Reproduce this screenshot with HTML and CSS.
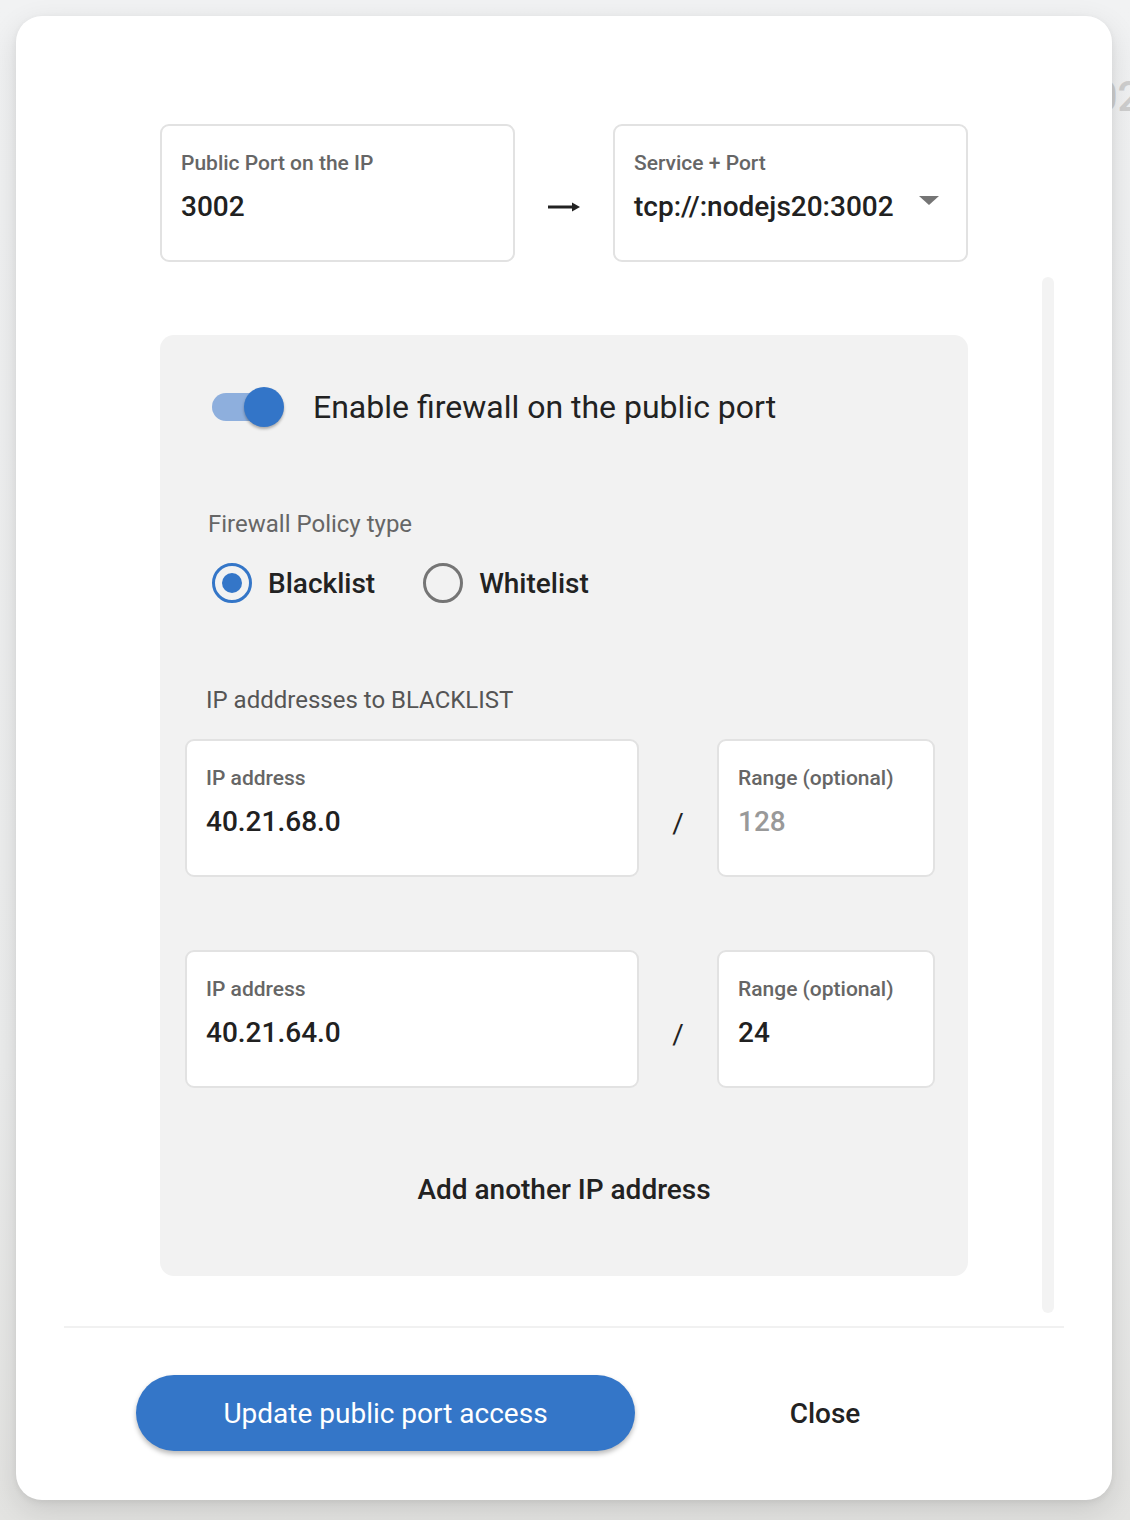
FILE: index.html
```html
<!DOCTYPE html>
<html lang="en">
<head>
<meta charset="utf-8">
<title>Public port access</title>
<link rel="stylesheet" href="styles.css">
</head>
<body>
<div class="bg-text">3002</div>
<div class="modal">
  <div class="scroll">
    <div class="content">
      <div class="port-row">
        <div class="field port-field">
          <div class="label">Public Port on the IP</div>
          <div class="value">3002</div>
        </div>
        <svg class="arrow" width="34" height="14" viewBox="0 0 34 14" aria-hidden="true">
          <path d="M1 7H29" stroke="#222" stroke-width="3" fill="none"/>
          <path d="M25 2.5L33 7L25 11.5Z" fill="#222"/>
        </svg>
        <div class="field port-field select">
          <div class="label">Service + Port</div>
          <div class="value">tcp://:nodejs20:3002</div>
          <span class="caret"></span>
        </div>
      </div>

      <div class="panel">
        <div class="toggle-row">
          <span class="switch"><span class="track"></span><span class="thumb"></span></span>
          <span class="toggle-label">Enable firewall on the public port</span>
        </div>

        <div class="section-label">Firewall Policy type</div>
        <div class="radios">
          <div class="radio-item">
            <span class="radio checked"></span>
            <span class="radio-text">Blacklist</span>
          </div>
          <div class="radio-item">
            <span class="radio"></span>
            <span class="radio-text">Whitelist</span>
          </div>
        </div>

        <div class="list-label">IP adddresses to BLACKLIST</div>

        <div class="ip-row">
          <div class="field ip-field">
            <div class="label">IP address</div>
            <div class="value">40.21.68.0</div>
          </div>
          <div class="slash">/</div>
          <div class="field range-field">
            <div class="label">Range (optional)</div>
            <div class="value placeholder">128</div>
          </div>
        </div>

        <div class="ip-row second">
          <div class="field ip-field">
            <div class="label">IP address</div>
            <div class="value">40.21.64.0</div>
          </div>
          <div class="slash">/</div>
          <div class="field range-field">
            <div class="label">Range (optional)</div>
            <div class="value">24</div>
          </div>
        </div>

        <div class="add">Add another IP address</div>
      </div>
    </div>
    <div class="scrollbar"></div>
  </div>
  <div class="footer">
    <button class="primary">Update public port access</button>
    <button class="close">Close</button>
  </div>
</div>
</body>
</html>
```

FILE: styles.css
```css
* { box-sizing: border-box; }

html, body {
  margin: 0;
  padding: 0;
  height: 1520px;
  overflow: hidden;
}

body {
  background: linear-gradient(180deg, #f1f2f3 0%, #eceded 70%, #e3e3e1 100%);
  font-family: Roboto, "Noto Sans", "Liberation Sans", sans-serif;
  color: #212121;
  position: relative;
  padding-top: 16px;
}

.bg-text {
  position: absolute;
  left: 1046px;
  top: 72px;
  font-size: 42px;
  color: #cfcfcf;
  font-weight: 500;
}

.modal {
  position: relative;
  margin-left: 16px;
  width: 1096px;
  height: 1484px;
  background: #fff;
  border-radius: 26px;
  box-shadow: 0 10px 30px rgba(0, 0, 0, 0.12), 0 2px 6px rgba(0, 0, 0, 0.06);
  padding: 48px 48px 0 48px;
}

.scroll {
  position: relative;
  padding-top: 60px;
  padding-bottom: 50px;
}

.content {
  width: 808px;
  margin: 0 auto;
}

.scrollbar {
  position: absolute;
  right: 10px;
  top: 213px;
  bottom: 13px;
  width: 12px;
  border-radius: 6px;
  background: #f3f3f3;
}

/* fields */
.field {
  position: relative;
  height: 138px;
  background: #fff;
  border: 2px solid #e2e2e2;
  border-radius: 9px;
  padding: 25px 18px 0 19px;
}

.label {
  font-size: 21px;
  line-height: 24px;
  font-weight: 500;
  color: #666;
}

.value {
  margin-top: 15px;
  font-size: 28px;
  line-height: 34px;
  font-weight: 500;
  color: #212121;
}

.value.placeholder { color: #999; }

.port-row {
  display: flex;
  align-items: center;
  justify-content: space-between;
}

.port-field { width: 355px; }

.arrow { margin-top: 28px; }

.caret {
  position: absolute;
  right: 27px;
  top: 70px;
  width: 0;
  height: 0;
  border-left: 10px solid transparent;
  border-right: 10px solid transparent;
  border-top: 9px solid #757575;
}

/* firewall panel */
.panel {
  margin-top: 73px;
  background: #f2f2f2;
  border-radius: 14px;
  padding: 52px 33px 69px 25px;
}

.toggle-row {
  display: flex;
  align-items: center;
  height: 40px;
  margin-left: 27px;
  gap: 29px;
}

.switch {
  position: relative;
  width: 72px;
  height: 40px;
  flex: none;
}

.track {
  position: absolute;
  left: 0;
  top: 6px;
  width: 68px;
  height: 28px;
  border-radius: 14px;
  background: #8eafdd;
}

.thumb {
  position: absolute;
  left: 32px;
  top: 0;
  width: 40px;
  height: 40px;
  border-radius: 50%;
  background: #3375c8;
  box-shadow: 0 2px 3px rgba(0, 0, 0, 0.3);
}

.toggle-label {
  font-size: 32px;
  line-height: 40px;
  color: #222;
}

.section-label {
  margin-top: 83px;
  margin-left: 23px;
  font-size: 24px;
  line-height: 28px;
  color: #666;
}

.radios {
  margin-top: 25px;
  margin-left: 27px;
  display: flex;
  gap: 48px;
}

.radio-item {
  display: flex;
  align-items: center;
  gap: 16px;
  height: 40px;
}

.radio {
  width: 40px;
  height: 40px;
  border-radius: 50%;
  border: 3px solid #757575;
  display: flex;
  align-items: center;
  justify-content: center;
}

.radio.checked { border-color: #3476c8; }

.radio.checked::after {
  content: "";
  width: 20px;
  height: 20px;
  border-radius: 50%;
  background: #3476c8;
}

.radio-text {
  font-size: 28px;
  font-weight: 500;
  color: #222;
}

.list-label {
  margin-top: 83px;
  margin-left: 21px;
  font-size: 24px;
  line-height: 28px;
  color: #555;
}

.ip-row {
  margin-top: 25px;
  display: flex;
  align-items: center;
}

.ip-row.second { margin-top: 73px; }

.ip-field { width: 454px; }

.range-field { width: 218px; }

.slash {
  width: 78px;
  text-align: center;
  font-size: 28px;
  color: #222;
  margin-top: 30px;
}

.add {
  margin-top: 85px;
  padding-left: 8px;
  text-align: center;
  font-size: 28px;
  line-height: 34px;
  font-weight: 500;
  color: #222;
}

/* footer */
.footer {
  border-top: 2px solid #f1f1f1;
  display: flex;
  align-items: center;
  padding: 47px 0 0 72px;
}

button {
  font-family: Roboto, "Noto Sans", "Liberation Sans", sans-serif;
  border: none;
  cursor: pointer;
}

.primary {
  width: 499px;
  height: 76px;
  border-radius: 38px;
  background: #3476c8;
  color: #fff;
  font-size: 28px;
  font-weight: 400;
  box-shadow: 0 3px 5px rgba(0, 0, 0, 0.28);
}

.close {
  width: 200px;
  margin-left: 90px;
  background: transparent;
  font-size: 28px;
  font-weight: 500;
  color: #222;
  height: 76px;
}
```
